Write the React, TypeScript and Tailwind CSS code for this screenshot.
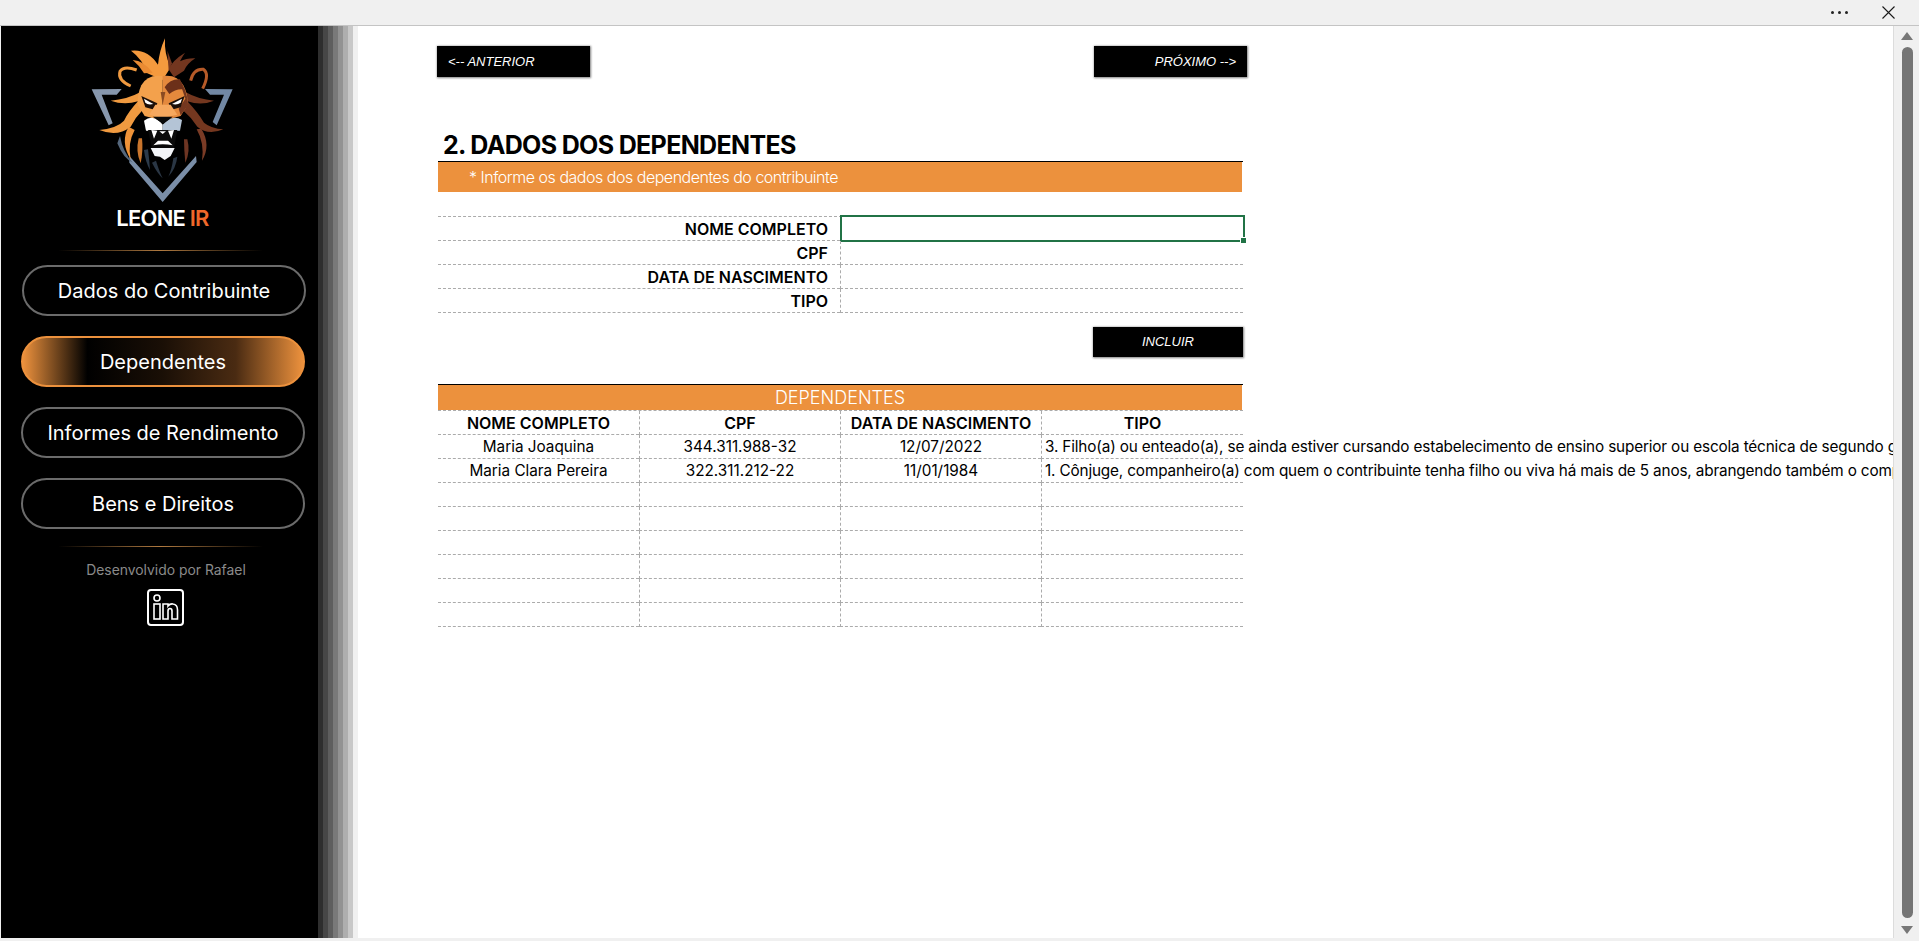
const bands = ["bg-[#2e2e2e]", "bg-[#474747]", "bg-[#5e5e5e]", "bg-[#797979]", "bg-[#929292]", "bg-[#aeaeae]", "bg-[#c8c8c8]", "bg-[#f0f0f0]"];

const navItems = [
  { label: "Dados do Contribuinte", cls: "ml-[21px] border-[#6b6b6b]" },
  { label: "Dependentes", cls: "ml-[20px] border-[#ec913d] bg-[linear-gradient(90deg,#ec913d_0%,#000000_23%,#1a0f06_50%,#4a2b12_76%,#ec913d_100%)]" },
  { label: "Informes de Rendimento", cls: "ml-[20px] border-[#6b6b6b]" },
  { label: "Bens e Direitos", cls: "ml-[20px] border-[#6b6b6b]" },
];

const formRows = ["NOME COMPLETO", "CPF", "DATA DE NASCIMENTO", "TIPO"];

const tableRows = [
  [
    "Maria Joaquina",
    "344.311.988-32",
    "12/07/2022",
    "3. Filho(a) ou enteado(a), se ainda estiver cursando estabelecimento de ensino superior ou escola técnica de segundo grau, até 24 anos",
  ],
  [
    "Maria Clara Pereira",
    "322.311.212-22",
    "11/01/1984",
    "1. Cônjuge, companheiro(a) com quem o contribuinte tenha filho ou viva há mais de 5 anos, abrangendo também o companheiro do mesmo sexo",
  ],
  ["", "", "", ""],
  ["", "", "", ""],
  ["", "", "", ""],
  ["", "", "", ""],
  ["", "", "", ""],
  ["", "", "", ""],
];

const LionLogo = () => (
  <svg width="180" height="172" viewBox="0 0 540 516">
    {/* triangulo */}
    <path d="M65 178 L155 177 L140 194 L95 194 L128 280 L116 286 Z" fill="#8797ad" />
    <path d="M488 178 L405 177 L420 194 L462 194 L428 276 L440 286 Z" fill="#7288a4" />
    <path d="M178 378 L278 490 L378 378 L380 396 L278 516 L178 398 Z" fill="#7a8ea8" />
    {/* mechas de baixo */}
    <path d="M150 318 Q158 365 188 398 Q160 385 142 340 Z" fill="#55677c" />
    <path d="M176 290 Q150 335 182 388 Q172 340 194 300 Z" fill="#ee9238" />
    <path d="M206 325 Q196 365 212 400 Q220 360 216 325 Z" fill="#c9752c" />
    <path d="M222 360 Q226 395 240 420 Q238 390 234 358 Z" fill="#2c3a4a" />
    <path d="M258 392 Q268 425 278 445 Q262 430 246 398 Z" fill="#2a3644" />
    <path d="M352 328 Q362 365 346 398 Q342 360 342 328 Z" fill="#6e3523" />
    <path d="M394 296 Q424 345 396 392 Q404 340 380 298 Z" fill="#7a3b25" />
    <path d="M310 385 Q305 420 295 440 Q318 415 322 380 Z" fill="#2a3644" />
    {/* chamas laterais */}
    <path d="M212 186 Q172 208 122 212 Q162 226 204 214 Q176 244 162 272 Q142 294 88 300 Q142 322 182 290 Q196 262 218 240 Z" fill="#f09a40" />
    <path d="M346 186 Q385 208 432 212 Q395 228 352 214 Q384 248 402 278 Q424 296 460 298 Q414 318 382 290 Q364 262 338 240 Z" fill="#74371f" />
    {/* topo da juba */}
    <path d="M183 62 Q232 56 264 104 Q268 62 285 25 Q282 72 302 112 L278 150 L232 130 Q218 88 183 62 Z" fill="#f49a3e" />
    <path d="M188 90 Q222 92 248 128 L222 130 Q208 106 188 90 Z" fill="#ea8b33" />
    <path d="M296 118 Q306 92 345 68 Q332 88 330 94 Q350 84 376 85 Q352 100 342 122 L312 142 Z" fill="#73361f" />
    <path d="M292 62 L306 100 L296 122 Z" fill="#73361f" />
    {/* orelhas */}
    <path d="M182 168 Q142 150 150 124 Q162 106 200 120" fill="none" stroke="#f09a40" strokeWidth="9" />
    <path d="M362 152 Q370 116 400 118 Q420 132 398 176" fill="none" stroke="#b65a28" strokeWidth="9" />
    {/* rosto */}
    <path d="M278 138 Q232 132 214 166 Q200 196 204 226 L224 258 L278 272 Z" fill="#f3a14c" />
    <path d="M278 138 Q322 132 340 166 Q356 196 352 226 L332 258 L278 272 Z" fill="#e4893d" />
    <path d="M326 146 Q352 176 354 226 L332 256 L326 236 L346 206 Z" fill="#74371f" />
    <path d="M284 172 Q300 146 330 148 L340 178 Q316 176 298 192 Z" fill="#6c3019" />
    <path d="M214 198 L262 220 L256 240 L226 232 Z" fill="#1c0f08" />
    <path d="M344 198 L296 220 L302 240 L332 232 Z" fill="#1c0f08" />
    <path d="M222 206 L250 222 Q234 226 226 218 Z" fill="#ffffff" />
    <path d="M336 206 L306 222 Q322 226 332 218 Z" fill="#ffffff" />
    <path d="M272 186 L278 224 L286 186 Z" fill="#8a4a22" />
    {/* focinho */}
    <path d="M256 224 L302 224 L322 254 L278 264 L238 254 Z" fill="#f6a85e" />
    <path d="M222 272 Q250 250 278 284 L278 304 L228 302 Z" fill="#ffffff" />
    <path d="M278 284 Q306 252 336 270 L330 302 L278 304 Z" fill="#b4c4d6" />
    <path d="M248 260 L308 260 L280 282 Z" fill="#0a0a0a" />
    {/* boca */}
    <path d="M234 300 L322 300 L312 354 L246 354 Z" fill="#0a0a0a" />
    <path d="M244 300 L252 326 L262 302 Z M312 300 L304 326 L294 302 Z M268 304 L288 304 L278 312 Z" fill="#ffffff" />
    <path d="M250 346 L264 332 L294 332 L308 346 Q278 340 250 346 Z" fill="#ffffff" />
    <path d="M242 354 L314 354 L302 378 L284 390 L270 380 L254 378 Z" fill="#f2f4f7" />
  </svg>
);

const ActionButton = ({ label, cls }: { label: string; cls: string }) => (
  <div className={`flex items-center bg-black text-white italic text-[13px] [font-family:'Liberation_Sans',sans-serif] shadow-[0_0_2px_0.5px_#808080] ${cls}`}>
    {label}
  </div>
);

const Divider = () => (
  <div className="ml-[57px] h-px w-[205px] bg-gradient-to-r from-transparent via-[#b07a40] to-transparent" />
);

export default function App() {
  return (
    <div className="flex h-[941px] w-[1919px] flex-col overflow-hidden bg-[#f0f0f0] [font-family:Inter,sans-serif]">
      {/* barra do topo */}
      <div className="flex h-[26px] shrink-0 items-center justify-end border-b border-[#c4c4c4] bg-[#f0f0f0] pr-[24px]">
        <div className="mr-[34px] flex gap-[4px]">
          <span className="h-[3px] w-[3px] rounded-full bg-[#222222]" />
          <span className="h-[3px] w-[3px] rounded-full bg-[#222222]" />
          <span className="h-[3px] w-[3px] rounded-full bg-[#222222]" />
        </div>
        <svg width="13" height="13" viewBox="0 0 13 13" className="mb-px">
          <path d="M0.5 0.5 L12.5 12.5 M12.5 0.5 L0.5 12.5" stroke="#1a1a1a" strokeWidth="1.1" fill="none" />
        </svg>
      </div>

      <div className="flex min-h-0 flex-1 pb-[3px] pl-px">
        {/* menu lateral */}
        <aside className="w-[317px] shrink-0 bg-black pt-[4px] text-white">
          <div className="ml-[69px] w-[180px]">
            <LionLogo />
            <div className="mt-[2px] pl-[5px] text-center text-[22px] font-semibold leading-[28px] tracking-[-0.8px]">
              LEONE <span className="text-[#f0682a]">IR</span>
            </div>
          </div>
          <div className="mt-[18px]">
            <Divider />
          </div>
          <nav className="mt-[14px] flex flex-col gap-[20px]">
            {navItems.map((item) => (
              <div
                key={item.label}
                className={`flex h-[51px] w-[284px] items-center justify-center rounded-full border-2 text-[20px] ${item.cls}`}
              >
                {item.label}
              </div>
            ))}
          </nav>
          <div className="mt-[17px]">
            <Divider />
          </div>
          <div className="ml-[20px] mt-[14px] w-[290px] text-center text-[13.9px] leading-[18px] text-[#8a8a8a]">
            Desenvolvido por Rafael
          </div>
          <div className="ml-[146px] mt-[10px] flex h-[37px] w-[37px] items-center justify-center rounded-[4px] border-2 border-white">
            <svg width="29" height="29" viewBox="0 0 29 29" fill="none" stroke="#ffffff" strokeWidth="1.6">
              <circle cx="6" cy="5" r="3" />
              <rect x="3" y="11" width="6" height="15" />
              <path d="M12 11 H17 V13 Q19 10.5 22 11 Q26.5 11.5 26.5 17 V26 H21 V18 Q21 15.5 19 15.5 Q17 15.5 17 18 V26 H12 Z" />
            </svg>
          </div>
        </aside>

        {/* degrade */}
        <div className="flex w-[40px] shrink-0">
          {bands.map((band) => (
            <div key={band} className={`w-[5px] ${band}`} />
          ))}
        </div>

        {/* planilha */}
        <main className="min-w-0 flex-1 overflow-hidden border-r border-[#dcdcdc] bg-white pl-[80px] pt-[20px]">
          <div className="-ml-px flex w-[810px] justify-between">
            <ActionButton label="<-- ANTERIOR" cls="h-[31px] w-[153px] pl-[11px]" />
            <ActionButton label="PRÓXIMO -->" cls="h-[31px] w-[153px] justify-end pr-[11px]" />
          </div>

          <div className="w-[805px]">
            <h1 className="mt-[53px] h-[31px] pl-[5px] text-[25px] font-bold leading-[31px] tracking-[-0.65px] text-black">
              2. DADOS DOS DEPENDENTES
            </h1>
            <div className="border-t border-black" />
            <div className="flex h-[30px] w-[804px] items-center bg-[#ec913d] pl-[31px] text-[16px] font-light tracking-[-0.48px] text-white">
              * Informe os dados dos dependentes do contribuinte
            </div>

            {/* formulario */}
            <div className="mt-[24px] grid grid-cols-[402px_403px] border-t border-dashed border-[#ababab] text-[16px] font-semibold text-black">
              {formRows.map((label, i) => (
                <div key={label} className="contents">
                  <div className="flex h-[24px] items-center justify-end border-b border-dashed border-[#ababab] pr-[12px] pt-px">
                    {label}
                  </div>
                  <div className="relative h-[24px] border-b border-l border-dashed border-[#ababab]">
                    {i === 0 && (
                      <div className="absolute -left-px -top-[2px] h-[27px] w-[405px] border-2 border-[#217346]">
                        <span className="absolute -bottom-[4px] -right-[4px] h-[7px] w-[7px] border border-white bg-[#217346]" />
                      </div>
                    )}
                  </div>
                </div>
              ))}
            </div>

            <div className="mt-[14px] flex justify-end">
              <ActionButton label="INCLUIR" cls="h-[30px] w-[150px] justify-center" />
            </div>

            {/* tabela */}
            <div className="mt-[27px] border-t border-black" />
            <div className="flex h-[25px] w-[804px] items-center justify-center bg-[#ec913d] text-[18px] font-light text-white">
              DEPENDENTES
            </div>
            <div className="grid grid-cols-[201px_201px_201px_202px] border-t border-dashed border-[#ababab] text-[15.3px] text-black">
              {["NOME COMPLETO", "CPF", "DATA DE NASCIMENTO", "TIPO"].map((h, i) => (
                <div
                  key={h}
                  className={`flex h-[24px] items-center justify-center border-b border-dashed border-[#ababab] text-[16px] font-semibold ${i > 0 ? "border-l" : ""}`}
                >
                  {h}
                </div>
              ))}
              {tableRows.map((row, r) =>
                row.map((cell, c) => (
                  <div
                    key={`${r}-${c}`}
                    className={`flex h-[24px] items-center whitespace-nowrap border-b border-dashed border-[#ababab] pt-[2px] ${c > 0 ? "border-l" : ""} ${c < 3 ? "justify-center" : "pl-[3px] tracking-[-0.15px]"}`}
                  >
                    {cell}
                  </div>
                ))
              )}
            </div>
          </div>
        </main>

        {/* barra de rolagem */}
        <div className="flex w-[25px] shrink-0 flex-col items-center bg-[#f0f0f0] pl-px pt-[6px]">
          <svg width="12" height="8" viewBox="0 0 12 8" className="mb-[7px]">
            <path d="M6 0 L12 8 H0 Z" fill="#777777" />
          </svg>
          <div className="h-[871px] w-[11px] rounded-full bg-[#757575]" />
          <svg width="12" height="8" viewBox="0 0 12 8" className="mt-[8px]">
            <path d="M0 0 H12 L6 8 Z" fill="#777777" />
          </svg>
        </div>
      </div>
    </div>
  );
}
